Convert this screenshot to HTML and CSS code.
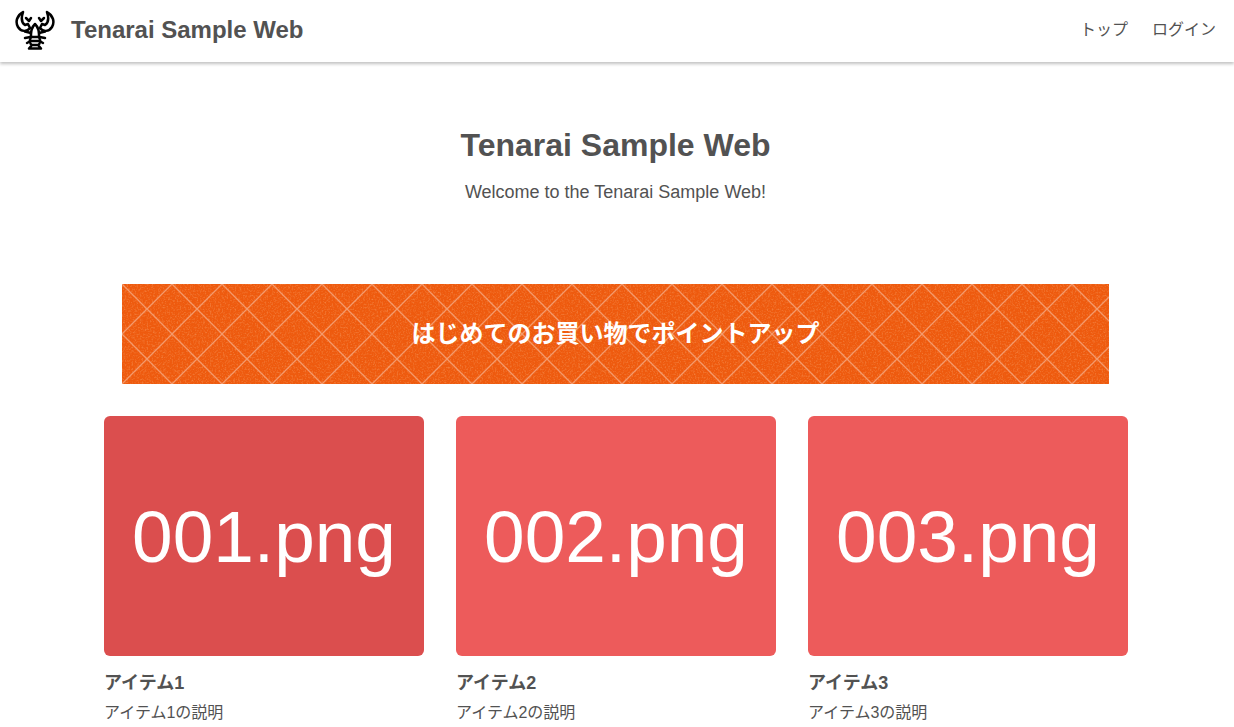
FILE: index.html
```html
<!DOCTYPE html>
<html lang="ja">
<head>
    <meta charset="UTF-8">
    <meta name="viewport" content="width=device-width, initial-scale=1.0">
    <title>Tenarai Sample Web</title>
    <link rel="stylesheet" href="styles.css">
</head>
<body>
    <nav class="navbar">
        <a class="brand" href="#">
            <svg class="logo" viewBox="0 0 40 40" fill="none" stroke="#000" stroke-width="2.5" stroke-linecap="round" stroke-linejoin="round">
                <path d="M8 2 C2 5 0 12 3 17 C6 22 12 22 15 18 L13 14 L10 15 C7 13 6 8 8 2 Z"/>
                <path d="M32 2 C38 5 40 12 37 17 C34 22 28 22 25 18 L27 14 L30 15 C33 13 34 8 32 2 Z"/>
                <path d="M11 8 L14 11 L16 8 M29 8 L26 11 L24 8"/>
                <path d="M20 14 C17 17 15.500 22 16 27 L24 27 C24.500 22 23 17 20 14 Z"/>
                <path d="M16 27 C14 31 15 34 17 35 L14 38.500 L26 38.500 L23 35 C25 34 26 31 24 27 M16 31 L24 31 M17 35 L23 35"/>
                <path d="M16 23 L10 21.500 M24 23 L30 21.500 M15.500 27 L10 28 M24.500 27 L30 28 M15.500 31 L12 33 M24.500 31 L28 33"/>
            </svg>
            <span class="brand-name">Tenarai Sample Web</span>
        </a>
        <div class="nav-links">
            <a href="#">トップ</a>
            <a href="#">ログイン</a>
        </div>
    </nav>

    <section class="hero">
        <h1 class="hero-title">Tenarai Sample Web</h1>
        <p class="hero-sub">Welcome to the Tenarai Sample Web!</p>
    </section>

    <div class="banner">
        <svg class="banner-bg" width="987" height="100">
            <defs>
                <filter id="grain" x="0" y="0" width="100%" height="100%">
                    <feTurbulence type="fractalNoise" baseFrequency="0.6" numOctaves="2" seed="4"/>
                    <feColorMatrix values="0 0 0 0 0.96  0 0 0 0 0.5  0 0 0 0 0.25  0.9 0 0 0 -0.42"/>
                </filter>
                <pattern id="lattice" width="50" height="50" patternUnits="userSpaceOnUse">
                    <path d="M0 0 L50 50 M50 0 L0 50" stroke="#f49a6c" stroke-width="1.3"/>
                </pattern>
            </defs>
            <rect width="987" height="100" fill="#ee5a0e"/>
            <rect width="987" height="100" filter="url(#grain)"/>
            <rect width="987" height="100" fill="url(#lattice)"/>
        </svg>
        <span class="banner-text">はじめてのお買い物でポイントアップ</span>
    </div>

    <div class="items">
        <div class="item">
            <div class="thumb hovered">001.png</div>
            <div class="item-name">アイテム1</div>
            <div class="item-desc">アイテム1の説明</div>
        </div>
        <div class="item">
            <div class="thumb">002.png</div>
            <div class="item-name">アイテム2</div>
            <div class="item-desc">アイテム2の説明</div>
        </div>
        <div class="item">
            <div class="thumb">003.png</div>
            <div class="item-name">アイテム3</div>
            <div class="item-desc">アイテム3の説明</div>
        </div>
    </div>
</body>
</html>
```

FILE: styles.css
```css
html, body {
    height: 100%;
    overflow: hidden;
}

body {
    margin: 0;
    background-color: #fff;
    color: #525252;
    font-family: "Liberation Sans", "Noto Sans CJK JP", sans-serif;
    font-size: 16px;
    line-height: 24px;
}

a {
    color: inherit;
    text-decoration: none;
}

.navbar {
    display: flex;
    align-items: center;
    justify-content: space-between;
    height: 60px;
    padding: 0 18px 2px 15px;
    box-shadow: 0 2px 3px rgba(10, 10, 10, 0.25);
}

.brand {
    display: flex;
    align-items: center;
}

.logo {
    width: 40px;
    height: 40px;
    margin-right: 16px;
}

.brand-name {
    font-size: 24px;
    font-weight: 700;
}

.nav-links {
    display: flex;
    gap: 24px;
}

.hero {
    padding: 63px 3px 0 0;
    text-align: center;
}

.hero-title {
    margin: 0;
    font-size: 32px;
    line-height: 40px;
    font-weight: 700;
}

.hero-sub {
    margin: 15px 0 0;
    font-size: 18px;
    line-height: 24px;
}

.banner {
    position: relative;
    display: flex;
    align-items: center;
    justify-content: center;
    width: 987px;
    height: 100px;
    margin: 80px auto 0 122px;
}

.banner-bg {
    position: absolute;
    top: 0;
    left: 0;
}

.banner-text {
    position: relative;
    color: #fff;
    font-size: 24px;
    font-weight: 700;
}

.items {
    display: flex;
    gap: 32px;
    margin: 32px 0 0 104px;
}

.item {
    width: 320px;
}

.thumb {
    display: flex;
    align-items: center;
    justify-content: center;
    box-sizing: border-box;
    height: 240px;
    padding-top: 2px;
    border-radius: 6px;
    background-color: #ed5b5b;
    color: #fff;
    font-size: 73px;
}

.thumb.hovered {
    background-color: #db4e4e;
}

.item-name {
    margin-top: 15px;
    font-size: 18px;
    font-weight: 700;
}

.item-desc {
    margin-top: 6px;
}
```
